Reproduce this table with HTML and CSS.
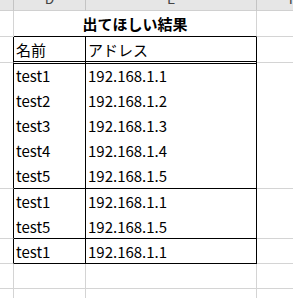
FILE: index.html
```html
<!DOCTYPE html>
<html lang="ja">
<head>
<meta charset="utf-8">
<link rel="stylesheet" href="styles.css">
</head>
<body>
<div class="sheet">
  <div class="hdr"></div>
  <div class="hdr"><span class="col">D</span></div>
  <div class="hdr"><span class="col">E</span></div>
  <div class="hdr"><span class="col">F</span></div>

  <div class="cell"></div>
  <div class="cell title">出てほしい結果</div>
  <div class="cell"></div>

  <div class="cell edge"></div>
  <div class="cell t hd">名前</div>
  <div class="cell t hd">アドレス</div>
  <div class="cell"></div>

  <div class="cell edge"></div>
  <div class="cell t">test1<br>test2<br>test3<br>test4<br>test5</div>
  <div class="cell t">192.168.1.1<br>192.168.1.2<br>192.168.1.3<br>192.168.1.4<br>192.168.1.5</div>
  <div class="cell"></div>

  <div class="cell edge"></div>
  <div class="cell t">test1<br>test5</div>
  <div class="cell t">192.168.1.1<br>192.168.1.5</div>
  <div class="cell"></div>

  <div class="cell edge"></div>
  <div class="cell t">test1</div>
  <div class="cell t">192.168.1.1</div>
  <div class="cell"></div>

  <div class="cell"></div>
  <div class="cell"></div>
  <div class="cell"></div>
  <div class="cell"></div>

  <div class="cell"></div>
  <div class="cell"></div>
  <div class="cell"></div>
  <div class="cell"></div>
</div>
</body>
</html>
```

FILE: styles.css
```css
html, body {
  margin: 0;
  padding: 0;
  background: #fff;
  overflow: hidden;
}

.sheet {
  display: grid;
  grid-template-columns: 14px 72px 171px 72px;
  grid-template-rows: 11px 26px 26px 126px 50px 25px 25px 25px;
  font-family: "Noto Sans CJK JP", "Noto Sans", sans-serif;
  font-size: 15px;
  color: #000;
  width: 329px;
}

.hdr {
  box-sizing: border-box;
  background: #e6e6e6;
  border-right: 1px solid #c4c4c4;
  border-bottom: 1px solid #d0d0d0;
  overflow: hidden;
  display: flex;
  justify-content: center;
}

.col {
  display: block;
  line-height: 15px;
  margin-top: -9px;
  color: #444;
  font-size: 14px;
}

.cell {
  box-sizing: border-box;
  border-right: 1px solid #d4d4d4;
  border-bottom: 1px solid #d4d4d4;
  padding-left: 2px;
  line-height: 25px;
  white-space: nowrap;
  overflow: visible;
}

.title {
  grid-column: span 2;
  border-bottom-color: #000;
  font-weight: bold;
  text-align: center;
  padding-left: 0;
  line-height: 25px;
}

.edge {
  border-right-color: #000;
}

.t {
  border-right-color: #000;
  border-bottom-color: #000;
}

.hd {
  border-bottom: 3px double #000;
  margin-bottom: -1px;
}
```
